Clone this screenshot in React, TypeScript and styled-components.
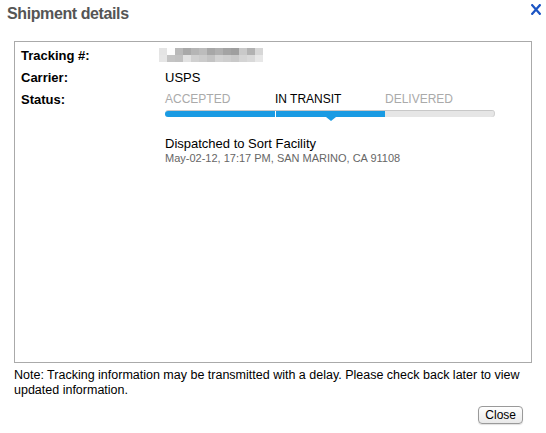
import React from 'react';
import styled, { createGlobalStyle } from 'styled-components';

const GlobalStyle = createGlobalStyle`
    html, body {
        margin: 0;
        padding: 0;
        background: #fff;
    }
    body {
        font-family: "Liberation Sans", Arial, sans-serif;
        color: #000;
    }
`;

const Dialog = styled.div`
    box-sizing: border-box;
    width: 546px;
    height: 433px;
    padding: 3px 14px 0 14px;
    display: flex;
    flex-direction: column;
`;

const TitleBar = styled.div`
    display: flex;
    align-items: flex-start;
    justify-content: space-between;
    height: 38px;
`;

const Title = styled.h2`
    margin: 0 0 0 -7px;
    font-size: 16px;
    letter-spacing: -0.4px;
    font-weight: bold;
    color: #555;
    line-height: 22px;
`;

const CloseX = styled.svg`
    display: block;
    margin: 1px -9px 0 0;
`;

const Panel = styled.div`
    box-sizing: border-box;
    height: 322px;
    border: 1px solid #aaa;
    padding: 5px 6px;
`;

const Row = styled.div`
    display: grid;
    grid-template-columns: 144px 1fr;
    align-items: start;
    min-height: 22px;
    font-size: 13px;
    line-height: 17px;
`;

const Label = styled.div`
    font-weight: bold;
`;

const Blur = styled.svg`
    display: block;
    margin: 1px 0 0 -6px;
`;

const Steps = styled.div`
    width: 330px;
`;

const StepLabels = styled.div`
    display: grid;
    grid-template-columns: 110px 110px 110px;
    font-size: 12px;
    line-height: 16px;
`;

const StepLabel = styled.span<{ $active?: boolean }>`
    color: ${p => (p.$active ? '#000' : '#aaa')};
`;

const Track = styled.div`
    position: relative;
    margin-top: 3px;
    height: 7px;
    border-radius: 4px;
    background: linear-gradient(#c8c8c8 0, #c8c8c8 1px, #e6e6e6 1px);
    box-shadow: inset -1px 0 0 #d0d0d0;
    display: flex;
`;

const Fill = styled.div<{ $first?: boolean }>`
    width: 110px;
    height: 6px;
    margin-top: 1px;
    background: #1a9be3;
    border-radius: ${p => (p.$first ? '3px 0 0 3px' : '0')};
    border-left: ${p => (p.$first ? 'none' : '1px solid #fff')};
    box-sizing: border-box;
`;

const Pointer = styled.div`
    position: absolute;
    left: 161px;
    top: 7px;
    width: 0;
    height: 0;
    border-left: 5px solid transparent;
    border-right: 5px solid transparent;
    border-top: 4px solid #1a9be3;
`;

const Event = styled.div`
    margin: 19px 0 0 144px;
`;

const EventTitle = styled.div`
    font-size: 13px;
    line-height: 15px;
`;

const EventMeta = styled.div`
    font-size: 11px;
    line-height: 14px;
    color: #666;
`;

const Note = styled.p`
    margin: 5px 0 0 0;
    font-size: 12.5px;
    line-height: 15px;
`;

const Footer = styled.div`
    display: flex;
    justify-content: flex-end;
    margin-top: 8px;
    padding-right: 9px;
`;

const Button = styled.button`
    font-family: "Liberation Sans", Arial, sans-serif;
    font-size: 12px;
    line-height: 14px;
    padding: 1px 6px;
    border: 1px solid #9a9a9a;
    border-radius: 4px;
    background: linear-gradient(#ffffff, #e9e9e9);
    color: #000;
    box-shadow: 0 1px 1px rgba(0, 0, 0, 0.12);
`;

const blurCells: [string, string][] = [
    ['#e4e4e4', '#e6e6e6'],
    ['#fdfdfd', '#c4c4c4'],
    ['#b9b9b9', '#c1c1c1'],
    ['#a9a9a9', '#e2e2e2'],
    ['#b5b5b5', '#d0d0d0'],
    ['#bcbcbc', '#cbcbcb'],
    ['#a7a7a7', '#c3c3c3'],
    ['#b0b0b0', '#d2d2d2'],
    ['#a4a4a4', '#cecece'],
    ['#9f9f9f', '#c9c9c9'],
    ['#c9c9c9', '#d4d4d4'],
    ['#b2b2b2', '#d9d9d9'],
    ['#d7d7d7', '#e7e7e7'],
];

const TrackingBlur = () => (
    <Blur width="104" height="14" viewBox="0 0 104 14">
        {blurCells.map(([top, bottom], i) => (
            <g key={i}>
                <rect x={i * 8} y={0} width={8} height={7} fill={top} />
                <rect x={i * 8} y={7} width={8} height={7} fill={bottom} />
            </g>
        ))}
    </Blur>
);

const App = () => {
    return <Dialog>
        <GlobalStyle />
        <TitleBar>
            <Title>Shipment details</Title>
            <CloseX width="10" height="11" viewBox="0 0 10 11" aria-label="Close">
                <path d="M1.2 1.2 L8.8 9.8 M8.8 1.2 L1.2 9.8" stroke="#1c55c4" strokeWidth="2.3" strokeLinecap="square" />
            </CloseX>
        </TitleBar>
        <Panel>
            <Row>
                <Label>Tracking #:</Label>
                <TrackingBlur />
            </Row>
            <Row>
                <Label>Carrier:</Label>
                <span>USPS</span>
            </Row>
            <Row>
                <Label>Status:</Label>
                <Steps>
                    <StepLabels>
                        <StepLabel>ACCEPTED</StepLabel>
                        <StepLabel $active>IN TRANSIT</StepLabel>
                        <StepLabel>DELIVERED</StepLabel>
                    </StepLabels>
                    <Track>
                        <Fill $first />
                        <Fill />
                        <Pointer />
                    </Track>
                </Steps>
            </Row>
            <Event>
                <EventTitle>Dispatched to Sort Facility</EventTitle>
                <EventMeta>May-02-12, 17:17 PM, SAN MARINO, CA 91108</EventMeta>
            </Event>
        </Panel>
        <Note>Note: Tracking information may be transmitted with a delay. Please check back later to view updated information.</Note>
        <Footer>
            <Button>Close</Button>
        </Footer>
    </Dialog>
};

export default App;
